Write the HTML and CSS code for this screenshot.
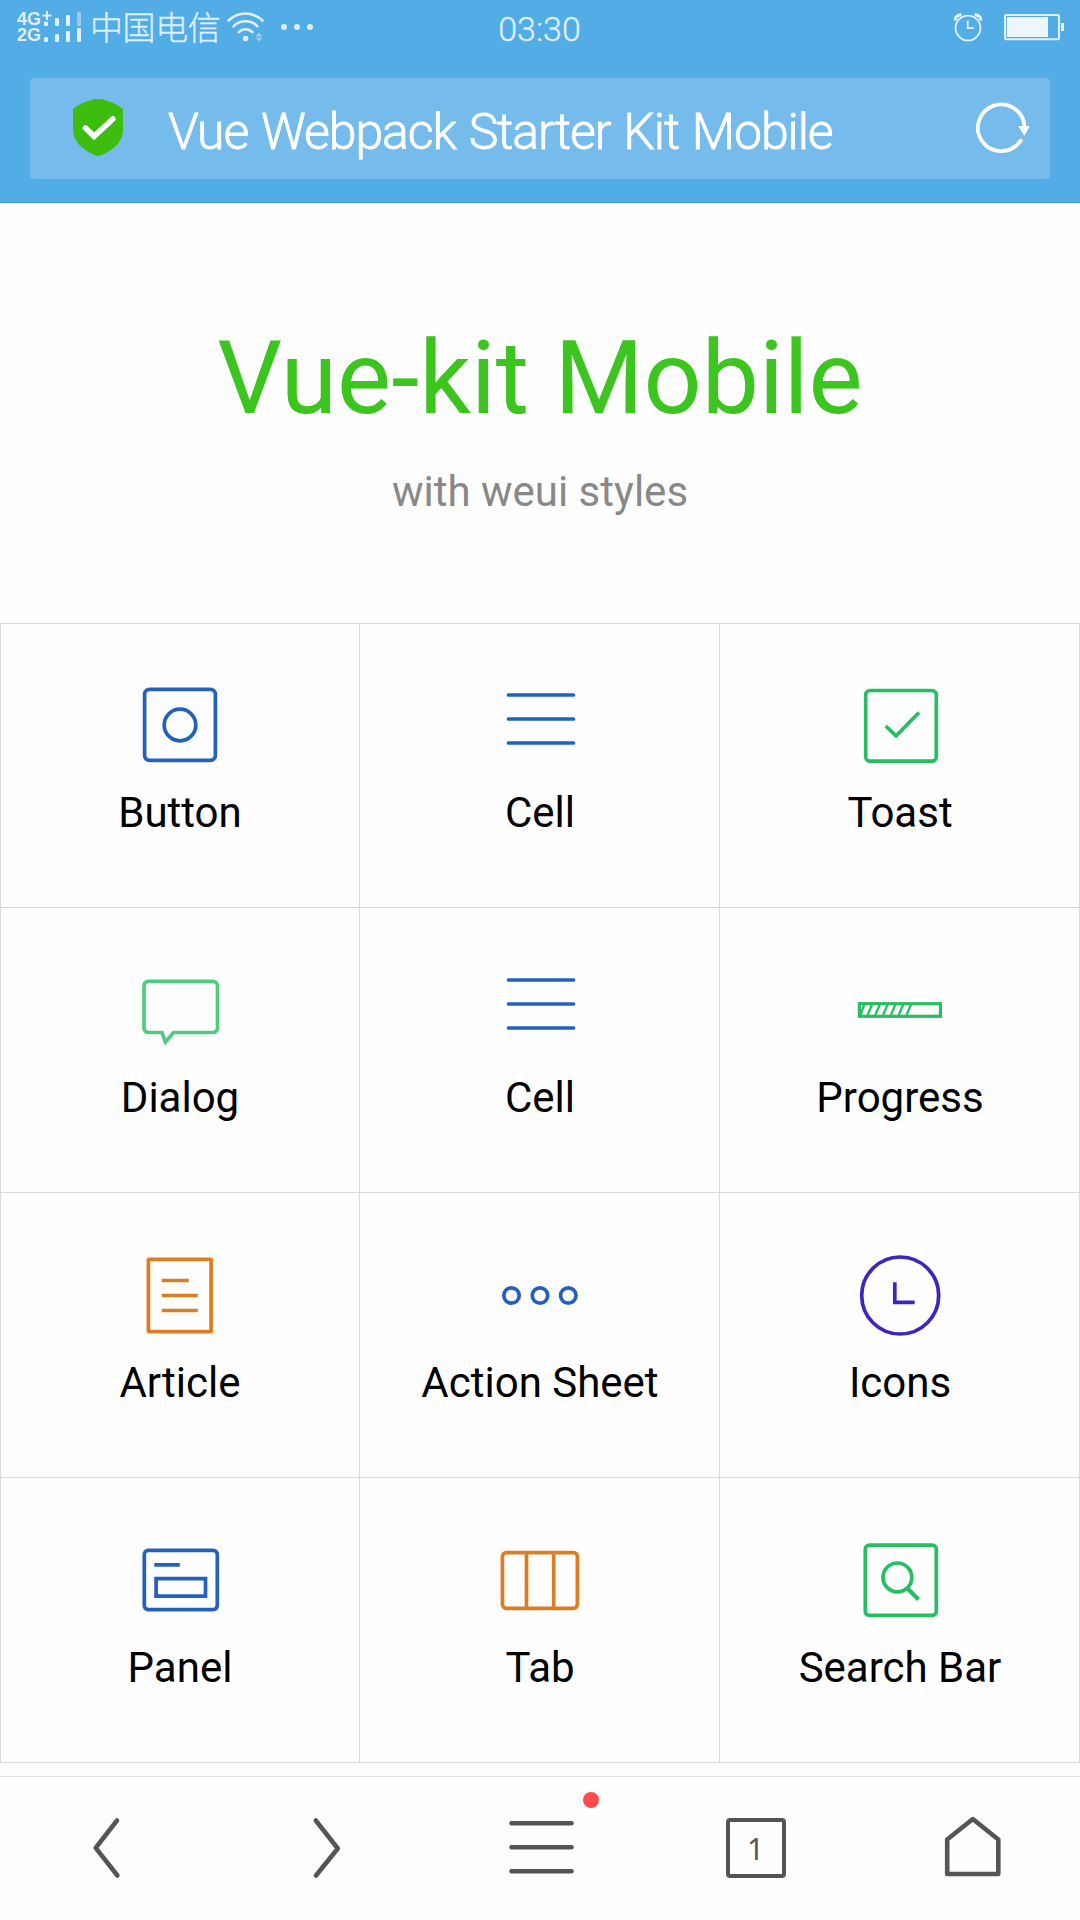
FILE: index.html
```html
<!DOCTYPE html>
<html lang="en">
<head>
<meta charset="utf-8">
<title>Vue Webpack Starter Kit Mobile</title>
<link rel="stylesheet" href="styles.css">
</head>
<body>
<header class="browser-top">
  <div class="status">
    <div class="status-left">
      <div class="networks"><span>4G</span><span>2G</span></div>
      <svg class="signal" width="42" height="34" viewBox="42 10 42 34">
        <path d="M47 11v9M42.500 15.500h9" stroke="#deeefa" stroke-width="2"/>
        <g fill="#e2f0fb"><rect x="44" y="21.500" width="4" height="4.500" rx="1"/><rect x="55" y="18" width="4" height="8" rx="1"/><rect x="66" y="15" width="4" height="11" rx="1"/><rect x="77" y="12" width="4" height="14" rx="1" opacity=".5"/>
        <rect x="44" y="37" width="4" height="5" rx="1"/><rect x="55" y="34" width="4" height="8" rx="1"/><rect x="66" y="31" width="4" height="11" rx="1"/><rect x="77" y="28" width="4" height="14" rx="1"/></g>
      </svg>
      <span class="carrier">中国电信</span>
      <svg class="wifi" width="90" height="34" viewBox="225 10 90 34" fill="none" stroke="#deeefa" stroke-width="2.600" stroke-linecap="round">
        <path d="M228.500 20.500Q236 13.500 245.500 13.500T262.500 20.500M233.500 26.300Q238.500 21.300 245.500 21.300T257.500 26.300M238.700 32.200Q241.500 29.200 245.500 29.200T252.500 32.200"/>
        <g fill="#deeefa" stroke="none"><circle cx="245.500" cy="38.500" r="2.700"/><path opacity=".55" d="M255.500 36.500 259 32.500l3.500 4zM255.500 37.800h7l-3.500 3.700z"/><circle cx="284" cy="27" r="3"/><circle cx="297" cy="27" r="3"/><circle cx="310" cy="27" r="3"/></g>
      </svg>
    </div>
    <div class="clock">03:30</div>
    <svg class="status-right" width="114" height="34" viewBox="952 10 114 34" fill="none" stroke="#e3f1fb" stroke-width="1.800">
      <circle cx="968" cy="28" r="12.400"/><path d="M967.700 20.500v7.700h6"/>
      <path d="M955.500 20.500q-1-5 6-5.800M980.500 20.500q1-5-6-5.800" stroke-width="3.200"/>
      <rect x="1005" y="15" width="54" height="24.200" rx="1.500" stroke-width="2"/><path d="M1006.800 17h41.200v20h-41.200zM1061 23h3v8h-3z" fill="#eef6fd" stroke="none"/>
    </svg>
  </div>
  <div class="address">
    <svg class="shield" width="52" height="60" viewBox="72 98 52 60">
      <path d="M94 99h8l12 4.200 9 5.500v21C123 142 113 151 98.300 156.300 83.500 151 73 142 73 129.700v-21l9-5.500z" fill="#3dbd0d"/>
      <path d="M85.500 128l8.600 8.300 18.700-17.300" fill="none" stroke="#fff" stroke-width="5.600" stroke-linecap="round"/>
    </svg>
    <span class="url">Vue Webpack Starter Kit Mobile</span>
    <svg class="reload" width="58" height="54" viewBox="974 101 58 54">
      <path d="M1024.500 127A23.300 23.300 0 1 0 1020.700 140.500" fill="none" stroke="#fff" stroke-width="3.800" stroke-linecap="round"/>
      <path d="M1018.300 126h11.500l-5.500 10z" fill="#fff"/>
    </svg>
  </div>
</header>

<main>
  <section class="hero">
    <h1>Vue-kit Mobile</h1>
    <p>with weui styles</p>
  </section>
  <nav class="grid">
    <a class="cell"><svg class="icon blue" viewBox="0 0 84 84"><rect x="6.600" y="5.300" width="70.800" height="71" rx="5"/><circle cx="42" cy="41" r="15.800"/></svg><span>Button</span></a>
    <a class="cell"><svg class="icon blue" viewBox="0 0 84 84"><path d="M10.500 11h65M10.500 35h65M10.500 59h65" stroke-linecap="round"/></svg><span>Cell</span></a>
    <a class="cell"><svg class="icon green" viewBox="0 0 84 84"><rect x="7.700" y="6.500" width="70.600" height="70.700" rx="4.500"/><path d="M27.800 42 38 52 61 28.500"/></svg><span>Toast</span></a>
    <a class="cell"><svg class="icon mint" viewBox="0 0 84 84"><path d="M10.500 12.300H75a4.500 4.500 0 0 1 4.500 4.500V59a4.500 4.500 0 0 1-4.500 4.500H35.500L27.400 73 24 63.500H10.500A4.500 4.500 0 0 1 6 59V16.800a4.500 4.500 0 0 1 4.500-4.500z"/></svg><span>Dialog</span></a>
    <a class="cell"><svg class="icon blue" viewBox="0 0 84 84"><path d="M10.500 11h65M10.500 35h65M10.500 59h65" stroke-linecap="round"/></svg><span>Cell</span></a>
    <a class="cell"><svg class="icon green" viewBox="0 0 84 84"><rect x="1.400" y="34.700" width="81" height="12.600" stroke-width="3.200"/><path stroke-width="2.300" d="M6.200 35.500 2.500 46M14 35.500 9.500 46M21.800 35.500 17.300 46M29.600 35.500 25.100 46M37.400 35.500 32.900 46M45.200 35.500 40.700 46M53 35.500 48.500 46"/></svg><span>Progress</span></a>
    <a class="cell"><svg class="icon orange" viewBox="0 0 84 84"><rect x="10.400" y="5.300" width="62.700" height="72.400" rx="1"/><path d="M23.800 26.500h27M23.800 41.500h36M23.800 56.500h36"/></svg><span>Article</span></a>
    <a class="cell"><svg class="icon blue" viewBox="0 0 84 84"><circle cx="13.500" cy="41.500" r="7.700"/><circle cx="42" cy="41.500" r="7.700"/><circle cx="70.300" cy="41.500" r="7.700"/></svg><span>Action Sheet</span></a>
    <a class="cell"><svg class="icon violet" viewBox="0 0 84 84"><circle cx="42.200" cy="41.500" r="38.500"/><path d="M36.800 28.300v20h19.800"/></svg><span>Icons</span></a>
    <a class="cell"><svg class="icon blue" viewBox="0 0 84 84"><rect x="6.300" y="12.400" width="73" height="59.200" rx="4"/><path d="M16.300 26.800h25.500M18.100 40.600h49.400v17.600H18.100z"/></svg><span>Panel</span></a>
    <a class="cell"><svg class="icon orange" viewBox="0 0 84 84"><rect x="4.400" y="14.600" width="75" height="55.700" rx="4"/><path d="M28.500 14.600v55.700M55.700 14.600v55.700"/></svg><span>Tab</span></a>
    <a class="cell"><svg class="icon green" viewBox="0 0 84 84"><rect x="7.300" y="7.100" width="71" height="70.300" rx="4"/><circle cx="39.400" cy="39.400" r="14.400"/><path d="M49 50 60.500 61.500" stroke-width="4.200"/></svg><span>Search Bar</span></a>
  </nav>
</main>

<footer class="toolbar">
  <svg width="60" height="72" viewBox="76 1812 60 72"><path d="M117 1820.500 95.700 1847.800 117.400 1875.500"/></svg>
  <svg width="60" height="72" viewBox="296 1812 60 72"><path d="M315.800 1820.500 337.800 1848.500 316 1875.500"/></svg>
  <div class="menu">
    <svg width="68" height="72" viewBox="508 1812 68 72"><path d="M511.500 1823.200h60M511.500 1847.200h60M511.500 1871.200h60"/></svg>
    <i class="badge"></i>
  </div>
  <div class="tabs">1</div>
  <svg width="60" height="72" viewBox="943 1812 60 72"><path d="M947.200 1839.500 972.800 1819 998.300 1839.500V1874H947.200z"/></svg>
</footer>
</body>
</html>
```
FILE: styles.css
```css
* { box-sizing: border-box; }
body {
  margin: 0;
  width: 1080px;
  height: 1920px;
  overflow: hidden;
  display: flex;
  flex-direction: column;
  background: #fefefe;
  font-family: Roboto, "Noto Sans CJK SC", sans-serif;
}
svg { display: block; flex: none; }

.browser-top {
  height: 203px;
  background: #52ace6;
  border-bottom: 1px solid #3d9fe0;
}
.status {
  height: 78px;
  display: grid;
  grid-template-columns: 1fr auto 1fr;
  align-items: start;
  padding: 10px 14px 0 17px;
  color: #deeefa;
}
.status-left { display: flex; height: 34px; }
.networks {
  display: flex;
  flex-direction: column;
  width: 25px;
  font: bold 18px/16px "Liberation Sans", sans-serif;
  padding-top: 1px;
}
.carrier {
  width: 135px;
  margin-left: 6px;
  font: 300 33px/32px "Noto Sans CJK SC", sans-serif;
  letter-spacing: -0.4px;
  -webkit-text-stroke: 0.4px currentColor;
  white-space: nowrap;
}
.clock {
  margin-left: -4px;
  font-weight: 300;
  font-size: 34px;
  line-height: 39px;
  -webkit-text-stroke: 0.4px currentColor;
}
.status-right { justify-self: end; }

.address {
  height: 101px;
  margin: 0 30px;
  padding: 0 18px 1px 42px;
  display: flex;
  align-items: center;
  border-radius: 4px;
  background: #75bced;
}
.shield { margin-right: 44px; }
.url {
  flex: 1;
  color: #fff;
  font-weight: 300;
  font-size: 50px;
  letter-spacing: -1.1px;
  word-spacing: 1.8px;
  line-height: 60px;
  padding-top: 8px;
  white-space: nowrap;
  -webkit-text-stroke: 0.8px currentColor;
}

.hero { height: 420px; padding-top: 112px; text-align: center; }
.hero h1 {
  margin: 0;
  color: #3cc51f;
  font-weight: 400;
  font-size: 102px;
  line-height: 126px;
}
.hero p {
  margin: 20px 0 0;
  color: #888;
  font-size: 42px;
  line-height: 62px;
}

.grid {
  display: grid;
  grid-template-columns: 359px 360px 360px;
  grid-template-rows: 284px 285px 285px 285px;
  border: solid #d9d9d9;
  border-width: 1px 0 0 1px;
}
.cell {
  border: solid #d9d9d9;
  border-width: 0 1px 1px 0;
  padding-top: 60px;
  display: flex;
  flex-direction: column;
  align-items: center;
  font-size: 42px;
  line-height: 50px;
  color: #000;
}
.cell:nth-child(n + 4) { padding-top: 61px; }
.cell:nth-child(n + 10) { padding-top: 60px; }
.cell:not(:nth-child(3n + 1)) { padding-left: 1px; }
.cell span { margin-top: 20px; }
.cell:nth-child(n + 10) span { margin-top: 21px; }
.icon { width: 84px; height: 84px; fill: none; stroke-width: 3.7; overflow: visible; }
.blue { stroke: #2461bd; }
.green { stroke: #25bf62; }
.mint { stroke: #50cb81; }
.orange { stroke: #de7c22; }
.violet { stroke: #3d25bd; }

.toolbar {
  margin-top: auto;
  height: 144px;
  border-top: 1px solid #dfdfdf;
  background: #fefefe;
  padding: 0 0 1px 76px;
  display: flex;
  align-items: center;
}
.toolbar svg { fill: none; stroke: #555; stroke-width: 4.6; stroke-linecap: round; stroke-linejoin: round; }
.toolbar > svg:first-child { margin-right: 160px; }
.menu { position: relative; margin: 0 150px 0 152px; }
.badge {
  position: absolute;
  left: 75px;
  top: -20px;
  width: 16px;
  height: 16px;
  border-radius: 50%;
  background: #ff4b4b;
}
.tabs {
  width: 60px;
  height: 60px;
  margin-right: 157px;
  padding-right: 1px;
  border: 4.5px solid #555;
  border-radius: 4px;
  color: #555;
  font: 30px/53px "Noto Sans", sans-serif;
  text-align: center;
}
```
